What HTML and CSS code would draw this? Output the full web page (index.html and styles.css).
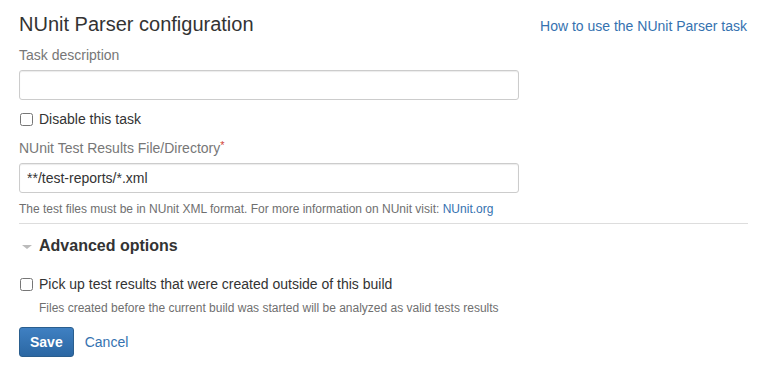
FILE: index.html
```html
<!DOCTYPE html>
<html>
<head>
    <title>NUnit Parser configuration</title>
    <link rel="stylesheet" href="styles.css">
</head>
<body>
    <div class="page">
        <div class="head-row">
            <h1>NUnit Parser configuration</h1>
            <a class="help-link" href="#">How to use the NUnit Parser task</a>
        </div>

        <!-- task description -->
        <div class="field">
            <label class="field-label">Task description</label>
            <input class="text" type="text">
        </div>

        <div class="check-row">
            <input type="checkbox" class="check" id="disable">
            <label for="disable">Disable this task</label>
        </div>

        <!-- results path -->
        <div class="field second">
            <label class="field-label">NUnit Test Results File/Directory<span class="req">*</span></label>
            <input class="text" type="text" value="**/test-reports/*.xml">
            <p class="hint">The test files must be in NUnit XML format. For more information on NUnit visit: <a href="#">NUnit.org</a></p>
        </div>

        <hr>

        <div class="advanced">
            <span class="caret"></span>
            <h2>Advanced options</h2>
        </div>

        <div class="check-row outside">
            <input type="checkbox" class="check" id="outside">
            <label for="outside">Pick up test results that were created outside of this build</label>
        </div>
        <p class="hint indent">Files created before the current build was started will be analyzed as valid tests results</p>

        <div class="buttons">
            <button class="btn-save">Save</button>
            <a class="cancel" href="#">Cancel</a>
        </div>
    </div>
</body>
</html>
```

FILE: styles.css
```css
* {
    box-sizing: border-box;
}

body {
    margin: 0;
    font-family: "Liberation Sans", Arial, sans-serif;
    font-size: 14px;
    color: #333;
    background: #fff;
}

a {
    color: #3572b0;
    text-decoration: none;
}

.page {
    width: 748px;
    padding: 10px 0 0 19px;
}

.head-row {
    display: flex;
    justify-content: space-between;
    align-items: baseline;
}

h1 {
    margin: 0;
    font-size: 20px;
    font-weight: normal;
    line-height: 28px;
    color: #333;
}

.help-link {
    font-size: 14px;
    margin-right: 1px;
}

.field-label {
    display: block;
    color: #777;
    font-size: 14px;
    line-height: 20px;
    margin: 7px 0 5px;
}

.field.second .field-label {
    margin-top: 9px;
}

.req {
    color: #d04437;
    font-size: 11px;
    vertical-align: top;
    position: relative;
    top: -3px;
}

.text {
    display: block;
    width: 500px;
    height: 30px;
    border: 1px solid #ccc;
    border-radius: 3px;
    box-shadow: inset 0 1px 1px rgba(0, 0, 0, 0.08);
    padding: 4px 7px;
    font-family: inherit;
    font-size: 14px;
    color: #333;
}

.check-row {
    display: flex;
    align-items: center;
    margin-top: 9px;
    height: 20px;
}

.check {
    width: 13px;
    height: 13px;
    margin: 0 6px 0 1px;
}

.check-row label {
    font-size: 14px;
    color: #333;
}

.hint {
    font-size: 12px;
    color: #6f6f6f;
    margin: 8px 0 0;
    line-height: 16px;
}

.hint.indent {
    margin: 6px 0 0 20px;
}

hr {
    margin: 6px 0 0;
    border: 0;
    border-top: 1px solid #ddd;
    width: 729px;
}

.advanced {
    display: flex;
    align-items: center;
    height: 44px;
}

.caret {
    width: 0;
    height: 0;
    border-left: 5px solid transparent;
    border-right: 5px solid transparent;
    border-top: 4px solid #bbb;
    margin: 2px 7px 0 3px;
}

h2 {
    margin: 0;
    font-size: 16px;
    font-weight: bold;
    color: #333;
}

.check-row.outside {
    margin-top: 6px;
}

.buttons {
    display: flex;
    align-items: center;
    margin-top: 11px;
}

.btn-save {
    height: 30px;
    padding: 0 10px;
    border: 1px solid #2a5e8e;
    border-radius: 3px;
    background: linear-gradient(#3f80c2, #2b67a3);
    color: #fff;
    font-family: inherit;
    font-size: 14px;
    font-weight: bold;
}

.cancel {
    margin-left: 11px;
    font-size: 14px;
}
```
